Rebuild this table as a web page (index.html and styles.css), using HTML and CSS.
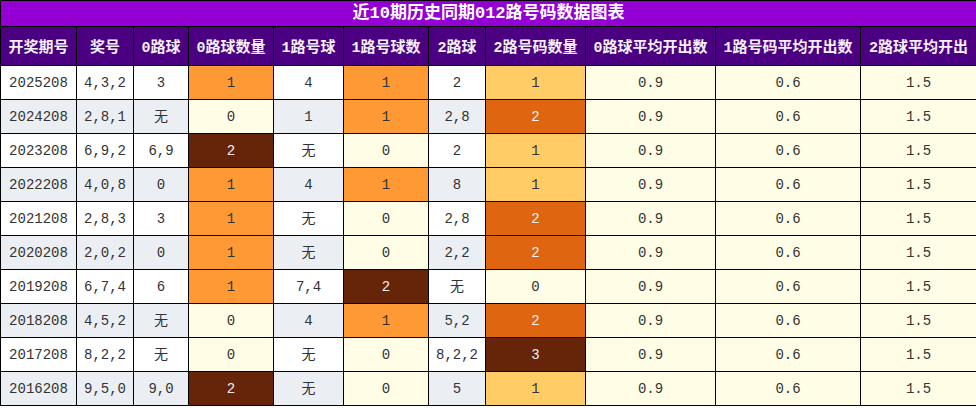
FILE: index.html
```html
<!DOCTYPE html>
<html lang="zh">
<head>
<meta charset="utf-8">
<title>近10期历史同期012路号码数据图表</title>
<link rel="stylesheet" href="styles.css">
</head>
<body>
<table class="chart">
<colgroup>
<col class="c1"><col class="c2"><col class="c3"><col class="c4"><col class="c5"><col class="c6"><col class="c7"><col class="c8"><col class="c9"><col class="c10"><col class="c11">
</colgroup>
<thead>
<tr class="title"><th colspan="11">近10期历史同期012路号码数据图表</th></tr>
<tr class="head">
<th>开奖期号</th><th>奖号</th><th>0路球</th><th>0路球数量</th><th>1路号球</th><th>1路号球数</th><th>2路球</th><th>2路号码数量</th><th>0路球平均开出数</th><th>1路号码平均开出数</th><th>2路球平均开出</th>
</tr>
</thead>
<tbody>
<tr class="odd"><td>2025208</td><td>4,3,2</td><td>3</td><td class="or">1</td><td>4</td><td class="or">1</td><td>2</td><td class="lo">1</td><td class="ly">0.9</td><td class="ly">0.6</td><td class="ly">1.5</td></tr>
<tr class="even"><td>2024208</td><td>2,8,1</td><td>无</td><td class="ly">0</td><td>1</td><td class="or">1</td><td>2,8</td><td class="do">2</td><td class="ly">0.9</td><td class="ly">0.6</td><td class="ly">1.5</td></tr>
<tr class="odd"><td>2023208</td><td>6,9,2</td><td>6,9</td><td class="br">2</td><td>无</td><td class="ly">0</td><td>2</td><td class="lo">1</td><td class="ly">0.9</td><td class="ly">0.6</td><td class="ly">1.5</td></tr>
<tr class="even"><td>2022208</td><td>4,0,8</td><td>0</td><td class="or">1</td><td>4</td><td class="or">1</td><td>8</td><td class="lo">1</td><td class="ly">0.9</td><td class="ly">0.6</td><td class="ly">1.5</td></tr>
<tr class="odd"><td>2021208</td><td>2,8,3</td><td>3</td><td class="or">1</td><td>无</td><td class="ly">0</td><td>2,8</td><td class="do">2</td><td class="ly">0.9</td><td class="ly">0.6</td><td class="ly">1.5</td></tr>
<tr class="even"><td>2020208</td><td>2,0,2</td><td>0</td><td class="or">1</td><td>无</td><td class="ly">0</td><td>2,2</td><td class="do">2</td><td class="ly">0.9</td><td class="ly">0.6</td><td class="ly">1.5</td></tr>
<tr class="odd"><td>2019208</td><td>6,7,4</td><td>6</td><td class="or">1</td><td>7,4</td><td class="br">2</td><td>无</td><td class="ly">0</td><td class="ly">0.9</td><td class="ly">0.6</td><td class="ly">1.5</td></tr>
<tr class="even"><td>2018208</td><td>4,5,2</td><td>无</td><td class="ly">0</td><td>4</td><td class="or">1</td><td>5,2</td><td class="do">2</td><td class="ly">0.9</td><td class="ly">0.6</td><td class="ly">1.5</td></tr>
<tr class="odd"><td>2017208</td><td>8,2,2</td><td>无</td><td class="ly">0</td><td>无</td><td class="ly">0</td><td>8,2,2</td><td class="br">3</td><td class="ly">0.9</td><td class="ly">0.6</td><td class="ly">1.5</td></tr>
<tr class="even"><td>2016208</td><td>9,5,0</td><td>9,0</td><td class="br">2</td><td>无</td><td class="ly">0</td><td>5</td><td class="lo">1</td><td class="ly">0.9</td><td class="ly">0.6</td><td class="ly">1.5</td></tr>
</tbody>
</table>
</body>
</html>
```
FILE: styles.css
```css
html, body {
  margin: 0;
  padding: 0;
  background: #ffffff;
}

.chart {
  width: 976px;
  table-layout: fixed;
  border-collapse: collapse;
  font-family: "Liberation Mono", "Noto Sans CJK SC", monospace;
  font-size: 14px;
  color: #333333;
}

.c1 { width: 76px; }
.c2 { width: 57px; }
.c3 { width: 55px; }
.c4 { width: 85px; }
.c5 { width: 70px; }
.c6 { width: 85px; }
.c7 { width: 57px; }
.c8 { width: 100px; }
.c9 { width: 130px; }
.c10 { width: 145px; }
.c11 { width: 116px; }

.chart th,
.chart td {
  border: 1px solid #000000;
  text-align: center;
  white-space: nowrap;
  overflow: hidden;
  padding: 0;
}

.title th {
  background: #9400d3;
  color: #ffffff;
  font-family: "Liberation Mono", "Noto Sans CJK SC", sans-serif;
  font-size: 17px;
  font-weight: bold;
  height: 25px;
  line-height: 24px;
}

.head th {
  background: #4b0082;
  color: #f4f0f8;
  font-family: "Liberation Mono", "Noto Sans CJK SC", sans-serif;
  font-size: 15px;
  font-weight: bold;
  height: 38px;
}

.chart td {
  height: 33px;
  line-height: 18px;
}

.odd td { background: #ffffff; }
.even td { background: #ebeef2; }

.chart td.ly { background: #fffde6; }
.chart td.or { background: #ff9933; }
.chart td.lo { background: #ffcc66; }
.chart td.do { background: #e06511; color: #f3f3f3; }
.chart td.br { background: #662508; color: #f0f0f0; }
```
